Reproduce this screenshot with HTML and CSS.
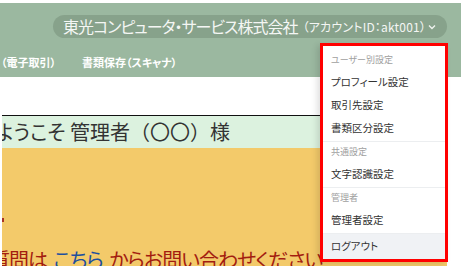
FILE: index.html
```html
<!DOCTYPE html>
<html lang="ja">
<head>
<meta charset="utf-8">
<title>アカウントメニュー</title>
<link rel="stylesheet" href="styles.css">
</head>
<body>
<header class="topbar">
  <div class="bar-row">
    <div class="account-pill">
      <span class="company">東光コンピュータ・サービス株式会社</span>
      <span class="acct">（アカウントID：akt001）</span>
      <svg class="chev" width="8" height="6" viewBox="0 0 8 6"><path d="M1 1.5 L4 4.5 L7 1.5" fill="none" stroke="#eef2ee" stroke-width="1.4"/></svg>
    </div>
  </div>
  <nav class="nav">
    <a class="nav-item">（電子取引）</a>
    <a class="nav-item">書類保存（スキャナ）</a>
  </nav>
</header>
<main class="content">
  <div class="panel">
    <div class="welcome">ようこそ 管理者<span class="wide">（〇〇）</span>様</div>
    <div class="notice">
      <span class="mark"></span>
      <p class="contact">質問は <a class="link">こちら</a> からお問い合わせください</p>
    </div>
  </div>
</main>
<div class="menu">
  <div class="menu-section first">
    <div class="menu-label">ユーザー別設定</div>
    <div class="menu-item">プロフィール設定</div>
    <div class="menu-item">取引先設定</div>
    <div class="menu-item">書類区分設定</div>
  </div>
  <div class="menu-section">
    <div class="menu-label">共通設定</div>
    <div class="menu-item">文字認識設定</div>
  </div>
  <div class="menu-section">
    <div class="menu-label">管理者</div>
    <div class="menu-item">管理者設定</div>
  </div>
  <div class="menu-item logout">ログアウト</div>
</div>
</body>
</html>
```
FILE: styles.css
```css
* { box-sizing: border-box; }
html, body { margin: 0; padding: 0; }
body {
  width: 461px;
  height: 266px;
  overflow: hidden;
  background: #ffffff;
  font-family: "Noto Sans CJK JP", "Noto Sans", sans-serif;
  font-feature-settings: "palt";
  position: relative;
}
.topbar {
  margin-top: 3px;
  height: 74px;
  background: #9bb8a0;
  display: flex;
  flex-direction: column;
}
.bar-row {
  padding-top: 12px;
  padding-left: 53px;
}
.account-pill {
  width: 394px;
  height: 23px;
  border-radius: 12px;
  background: #87a28b;
  display: flex;
  align-items: center;
  padding-left: 10px;
  color: #f4f6f4;
  white-space: nowrap;
}
.company {
  font-size: 16px;
  line-height: 23px;
  letter-spacing: -1px;
}
.acct {
  font-size: 12px;
  line-height: 23px;
  letter-spacing: 0.2px;
  margin-left: 5px;
}
.chev { margin-left: auto; margin-right: 11px; }
.nav {
  display: flex;
  gap: 26px;
  margin-top: 17px;
  margin-left: 1px;
  white-space: nowrap;
}
.nav-item {
  color: #ffffff;
  font-size: 11px;
  font-weight: 700;
  line-height: 14px;
}
.content {
  margin-top: 38px;
}
.panel {
  margin-left: 2px;
  width: 445px;
  border-top: 1px solid #111;
  overflow: hidden;
}
.welcome {
  height: 32px;
  background: #dcf2df;
  color: #333;
  font-size: 20px;
  line-height: 32px;
  margin-left: -6px;
  white-space: nowrap;
}
.wide {
  font-feature-settings: normal;
}
.notice {
  background: #f3ca6a;
  height: 130px;
  padding-top: 70px;
}
.mark {
  display: block;
  width: 3px;
  height: 4px;
  background: #a83222;
  margin-left: -1px;
}
.contact {
  margin: 24px 0 0 -12px;
  color: #a31d10;
  font-size: 20px;
  line-height: 28px;
  letter-spacing: -1px;
  word-spacing: 3px;
  white-space: nowrap;
}
.link {
  color: #1d4f9e;
  text-decoration: underline;
}
.menu {
  position: absolute;
  left: 320px;
  top: 43px;
  width: 128px;
  background: #fff;
  border: 3px solid #ff0000;
  box-shadow: -3px 2px 6px rgba(0,0,0,0.12);
  color: #333;
}
.menu-section {
  border-bottom: 1px solid #eceef0;
  padding-bottom: 2px;
}
.menu-section.first { padding-top: 4px; }
.menu-label {
  height: 20px;
  line-height: 20px;
  padding-left: 8px;
  font-size: 9px;
  color: #a0a0a0;
}
.menu-item {
  height: 23px;
  line-height: 23px;
  padding-left: 8px;
  font-size: 10.5px;
  color: #333;
  white-space: nowrap;
}
.menu-item.logout {
  height: 25px;
  line-height: 24px;
  background: #f0f2f5;
}
```
